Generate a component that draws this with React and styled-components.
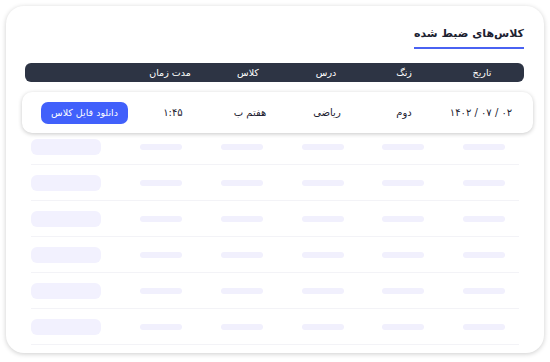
import React from "react";
import styled, { createGlobalStyle } from "styled-components";

const Global = createGlobalStyle`
  html, body { margin: 0; padding: 0; background: #ffffff; }
  body { font-family: "DejaVu Sans", "Noto Sans", sans-serif; }
  * { box-sizing: border-box; }
`;

const Page = styled.div`
  width: 550px;
  height: 362px;
  padding: 6px;
`;

const Card = styled.section`
  direction: rtl;
  width: 538px;
  height: 347px;
  background: #fff;
  border-radius: 18px;
  box-shadow: 0 1px 5px rgba(0, 0, 0, 0.2);
  padding: 20px 0 8px;
  display: flex;
  flex-direction: column;
  overflow: hidden;
`;

const TitleRow = styled.div`
  display: flex;
  justify-content: flex-start;
  padding-right: 20px;
`;

const Title = styled.h2`
  margin: 0;
  font-size: 11px;
  font-weight: 700;
  line-height: 16px;
  color: #1c2130;
  padding-bottom: 5px;
  border-bottom: 2px solid #4a62f2;
`;

const HeaderBar = styled.div`
  margin: 14px 20px 0 19px;
  height: 19px;
  background: #2d3444;
  border-radius: 6px;
  display: grid;
  grid-template-columns: repeat(5, 70px) 1fr;
  column-gap: 8px;
  padding-right: 7px;
  align-items: center;
`;

const HeadCell = styled.div`
  text-align: center;
  color: #ffffff;
  font-size: 9.5px;
  line-height: 19px;
  white-space: nowrap;
`;

const ActiveRow = styled.div`
  margin: 10px 11px 0 16px;
  height: 41px;
  background: #fff;
  border-radius: 10px;
  box-shadow: 0 1px 4px rgba(0, 0, 0, 0.22);
  display: grid;
  grid-template-columns: repeat(5, 70px) 1fr;
  column-gap: 7px;
  padding: 0 17px 0 19px;
  align-items: center;
  position: relative;
  z-index: 1;
`;

const Cell = styled.div`
  text-align: center;
  color: #1c2130;
  font-size: 10px;
  white-space: nowrap;
`;

const DownloadButton = styled.button`
  justify-self: end;
  width: 87px;
  height: 22px;
  border: 0;
  border-radius: 7px;
  background: #4160fb;
  color: #fff;
  font-family: inherit;
  font-size: 9.5px;
  padding: 0;
  white-space: nowrap;
`;

const List = styled.div`
  margin: -4px 25px 0;
  display: flex;
  flex-direction: column;
`;

const SkeletonRow = styled.div`
  height: 36px;
  border-bottom: 1px solid #f3f3f7;
  display: grid;
  grid-template-columns: repeat(5, 70px) 1fr;
  column-gap: 10.75px;
  align-items: center;
`;

const Bar = styled.div`
  justify-self: center;
  width: 42px;
  height: 6px;
  border-radius: 3px;
  background: #f1f0fd;
`;

const Pill = styled.div`
  justify-self: end;
  width: 70px;
  height: 16px;
  border-radius: 6px;
  background: #f2f1fe;
`;

const headers = ["تاریخ", "زنگ", "درس", "کلاس", "مدت زمان"];
const values = ["۰۲ / ۰۷ / ۱۴۰۲", "دوم", "ریاضی", "هفتم ب", "۱:۴۵"];

export default function App() {
  return (
    <>
      <Global />
      <Page>
        <Card>
          <TitleRow>
            <Title>کلاس‌های ضبط شده</Title>
          </TitleRow>
          <HeaderBar>
            {headers.map((h) => (
              <HeadCell key={h}>{h}</HeadCell>
            ))}
          </HeaderBar>
          <ActiveRow>
            {values.map((v) => (
              <Cell key={v}>{v}</Cell>
            ))}
            <DownloadButton>دانلود فایل کلاس</DownloadButton>
          </ActiveRow>
          <List>
            {Array.from({ length: 6 }).map((_, i) => (
              <SkeletonRow key={i}>
                <Bar />
                <Bar />
                <Bar />
                <Bar />
                <Bar />
                <Pill />
              </SkeletonRow>
            ))}
          </List>
        </Card>
      </Page>
    </>
  );
}
